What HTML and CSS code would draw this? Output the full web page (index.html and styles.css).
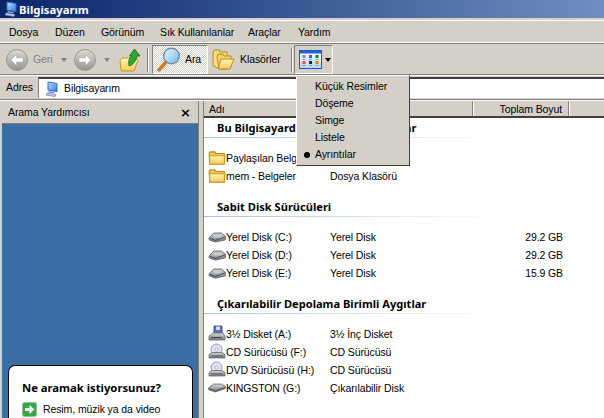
FILE: index.html
```html
<!DOCTYPE html>
<html lang="tr">
<head>
<meta charset="utf-8">
<title>Bilgisayarım</title>
<link rel="stylesheet" href="styles.css">
</head>
<body>
<svg class="sprites" width="0" height="0" aria-hidden="true">
  <defs>
    <linearGradient id="gBack" x1="0" y1="0" x2="0" y2="1"><stop offset="0" stop-color="#dcdcd6"/><stop offset="1" stop-color="#93938c"/></linearGradient>
    <linearGradient id="gFolder" x1="0" y1="0" x2="0" y2="1"><stop offset="0" stop-color="#fff4b8"/><stop offset="1" stop-color="#f5c85a"/></linearGradient>
    <linearGradient id="gPc" x1="0" y1="0" x2="1" y2="1"><stop offset="0" stop-color="#bcdcff"/><stop offset="1" stop-color="#2a7fe8"/></linearGradient>
    <linearGradient id="gDisk" x1="0" y1="0" x2="0" y2="1"><stop offset="0" stop-color="#d8d8d8"/><stop offset="1" stop-color="#74787e"/></linearGradient>
    <linearGradient id="gLens" x1="0" y1="0" x2="1" y2="1"><stop offset="0" stop-color="#f2fbff"/><stop offset="1" stop-color="#6fb4e4"/></linearGradient>
    <linearGradient id="gViews" x1="0" y1="0" x2="0" y2="1"><stop offset="0" stop-color="#ffffff"/><stop offset="1" stop-color="#b8d4f8"/></linearGradient>
    <symbol id="pc" viewBox="0 0 16 16">
      <path d="M4 1 L13 2.5 L13 10.5 L4 9 Z" fill="url(#gPc)" stroke="#3a68b8"/>
      <path d="M5 10 L11 11 L10 12.5 L4 11.5 Z" fill="#7f9fd8"/>
      <path d="M3 12 L12 13.5 L11 15.5 L2 14 Z" fill="#cfd4ea" stroke="#6a78a8" stroke-width=".7"/>
    </symbol>
    <symbol id="folder" viewBox="0 0 16 16">
      <path d="M1 4 Q1 2.5 2.5 2.5 L6 2.5 L7 4 L14 4 Q15 4 15 5.5 L14.5 13.5 L1.5 13.5 Z" fill="#f3c650" stroke="#b98a1e"/>
      <path d="M1.5 6 H14.5 V13.5 H1.5 Z" fill="url(#gFolder)" stroke="#c5971f" stroke-width=".8"/>
    </symbol>
    <symbol id="disk" viewBox="0 0 16 16">
      <path d="M1 9 L5 4.5 H12 L15.5 7.5 V10.5 L6.5 12.5 L1 10.5 Z" fill="url(#gDisk)" stroke="#5c6066" stroke-width=".8"/>
      <path d="M1.5 9 L6.5 11 L15 8" fill="none" stroke="#44474d" stroke-width=".8"/>
      <ellipse cx="8.5" cy="7" rx="3.6" ry="1.5" fill="#c8ccd2"/>
    </symbol>
    <symbol id="floppy" viewBox="0 0 18 18">
      <path d="M6 1 H14 V10 H6 Z" fill="#5f72c0" stroke="#2d3a80" stroke-width=".8"/>
      <path d="M8 1.5 V5 H12 V1.5" fill="#d8dcf0"/>
      <path d="M1 11 L5 8 H15 L17 11 V15 H1 Z" fill="url(#gDisk)" stroke="#666a72" stroke-width=".8"/>
      <path d="M3 12.5 H14" stroke="#3a3e46"/>
    </symbol>
    <symbol id="cd" viewBox="0 0 18 18">
      <circle cx="8.5" cy="6.5" r="5.5" fill="#dfe4f4" stroke="#7c86b4" stroke-width=".8"/>
      <circle cx="8.5" cy="6.5" r="1.6" fill="#fff" stroke="#7c86b4" stroke-width=".6"/>
      <path d="M1 11.5 L4 9.5 H14 L17 11.5 V15 H1 Z" fill="url(#gDisk)" stroke="#666a72" stroke-width=".8"/>
      <path d="M3 13 H15" stroke="#52565e"/>
    </symbol>
    <symbol id="usb" viewBox="0 0 16 16">
      <path d="M0.5 8 L5 4.5 H12 L15.5 6.5 V8.5 L6.5 11.5 L.5 9.5 Z" fill="url(#gDisk)" stroke="#6b6f75" stroke-width=".8"/>
      <path d="M1 8.5 L6.5 10.5 L15 7.5" fill="none" stroke="#44474d" stroke-width=".8"/>
    </symbol>
  </defs>
</svg>

<div class="window">
  <header class="titlebar">
    <svg class="title-icon"><use href="#pc"/></svg>
    <span class="title-text">Bilgisayarım</span>
  </header>

  <nav class="menubar">
    <span class="menu-item m-dosya">Dosya</span>
    <span class="menu-item m-duzen">Düzen</span>
    <span class="menu-item m-gorunum">Görünüm</span>
    <span class="menu-item m-sik">Sık Kullanılanlar</span>
    <span class="menu-item m-aras">Araçlar</span>
    <span class="menu-item">Yardım</span>
  </nav>

  <div class="toolbar">
    <svg class="round-btn back" viewBox="0 0 22 22">
      <circle cx="11" cy="11" r="10.5" fill="url(#gBack)" stroke="#9a9a92"/>
      <path d="M5 11 L10.5 5.5 V9 H17 V13 H10.5 V16.5 Z" fill="#fff" stroke="#a8a8a0" stroke-width=".5"/>
    </svg>
    <span class="tb-geri">Geri</span>
    <span class="caret grey caret-a"></span>
    <svg class="round-btn fwd" viewBox="0 0 22 22">
      <circle cx="11" cy="11" r="10.5" fill="url(#gBack)" stroke="#9a9a92"/>
      <path d="M17 11 L11.5 5.5 V9 H5 V13 H11.5 V16.5 Z" fill="#fff" stroke="#a8a8a0" stroke-width=".5"/>
    </svg>
    <span class="caret grey caret-b"></span>
    <svg class="up-icon" viewBox="0 0 22 24">
      <path d="M1 12 L3 10 H14 L19 12 L15 23 H2 Z" fill="url(#gFolder)" stroke="#c09a20"/>
      <path d="M10 18 C9 12 11 9 13 8 L10.5 8 L15.5 1 L21 8 L18 8 C17 13 14 17 10 18 Z" fill="#2ea82e" stroke="#146c14" stroke-width=".8"/>
    </svg>
    <span class="tb-sep sep-a"></span>
    <div class="tb-ara">
      <svg class="lens" viewBox="0 0 24 25">
        <path d="M2 23 L10 14" stroke="#d07a26" stroke-width="3.4" stroke-linecap="round"/>
        <circle cx="14.5" cy="9" r="7.8" fill="url(#gLens)" stroke="#6d8fb0" stroke-width="1.4"/>
      </svg>
      <span>Ara</span>
    </div>
    <div class="tb-klasor">
      <svg class="folders" viewBox="0 0 23 23">
        <path d="M1 5 L2 2 H7 L8 4 H15 V15 L6 20 L1 18 Z" fill="#f8dc84" stroke="#b98e1e"/>
        <path d="M5 9 L6 6 H11 L12 8 H19 V17 L16 21 H7 Z" fill="#f5d26a" stroke="#b98e1e"/>
        <path d="M6 21 L9 11 H22 L18 21 Z" fill="url(#gFolder)" stroke="#b98e1e"/>
      </svg>
      <span>Klasörler</span>
    </div>
    <span class="tb-sep sep-b"></span>
    <div class="tb-views">
      <svg class="views-icon" viewBox="0 0 23 19">
        <rect x=".5" y=".5" width="22" height="18" fill="url(#gViews)" stroke="#1f55c4"/>
        <rect x="1" y="1" width="21" height="2.5" fill="#2a62d4"/>
        <rect x="3.5" y="5" width="3" height="3" fill="#8a8ad0"/><rect x="10" y="5" width="3" height="3" fill="#2b62d8"/><rect x="16.5" y="5" width="3" height="3" fill="#14881e"/>
        <rect x="3.5" y="9" width="3" height=".8" fill="#888"/><rect x="10" y="9" width="3" height=".8" fill="#888"/><rect x="16.5" y="9" width="3" height=".8" fill="#888"/>
        <rect x="3.5" y="11" width="3" height="3" fill="#e8582c"/><rect x="10" y="11" width="3" height="3" fill="#14246c"/><rect x="16.5" y="11" width="3" height="3" fill="#c88a14"/>
        <rect x="3.5" y="15" width="3" height=".8" fill="#888"/><rect x="10" y="15" width="3" height=".8" fill="#888"/><rect x="16.5" y="15" width="3" height=".8" fill="#888"/>
      </svg>
      <span class="caret"></span>
    </div>
  </div>

  <div class="addressbar">
    <span class="addr-label">Adres</span>
    <div class="addr-field">
      <svg class="addr-icon"><use href="#pc"/></svg>
      <span>Bilgisayarım</span>
    </div>
  </div>

  <main class="content">
    <aside class="searchpane">
      <div class="pane-head"><span>Arama Yardımcısı</span><span class="pane-close">×</span></div>
      <div class="pane-body">
        <div class="pane-card">
          <h2>Ne aramak istiyorsunuz?</h2>
          <div class="pane-link">
            <svg class="go-arrow" viewBox="0 0 15 15">
              <rect x=".5" y=".5" width="14" height="14" rx="2" fill="#35a848" stroke="#8bc894"/>
              <path d="M3 6 H7.5 V3 L12.5 7.5 L7.5 12 V9 H3 Z" fill="#fff"/>
            </svg>
            <span>Resim, müzik ya da video</span>
          </div>
        </div>
      </div>
    </aside>

    <section class="listing">
      <div class="list-head">
        <span class="col col-name">Adı</span>
        <span class="col col-type">Tür</span>
        <span class="col col-size">Toplam Boyut</span>
        <span class="col col-rest"></span>
      </div>

      <h3 class="group first">Bu Bilgisayarda Depolanan Dosyalar</h3>
      <div class="row gap-first"><svg class="ri"><use href="#folder"/></svg><span class="name">Paylaşılan Belgeler</span><span class="type">Dosya Klasörü</span></div>
      <div class="row"><svg class="ri"><use href="#folder"/></svg><span class="name">mem - Belgeler</span><span class="type">Dosya Klasörü</span></div>

      <h3 class="group">Sabit Disk Sürücüleri</h3>
      <div class="row gap-first"><svg class="ri"><use href="#disk"/></svg><span class="name">Yerel Disk (C:)</span><span class="type">Yerel Disk</span><span class="size">29.2 GB</span></div>
      <div class="row"><svg class="ri"><use href="#disk"/></svg><span class="name">Yerel Disk (D:)</span><span class="type">Yerel Disk</span><span class="size">29.2 GB</span></div>
      <div class="row"><svg class="ri"><use href="#disk"/></svg><span class="name">Yerel Disk (E:)</span><span class="type">Yerel Disk</span><span class="size">15.9 GB</span></div>

      <h3 class="group group-last">Çıkarılabilir Depolama Birimli Aygıtlar</h3>
      <div class="row gap-first"><svg class="ri"><use href="#floppy"/></svg><span class="name">3½ Disket (A:)</span><span class="type">3½ İnç Disket</span></div>
      <div class="row"><svg class="ri"><use href="#cd"/></svg><span class="name">CD Sürücüsü (F:)</span><span class="type">CD Sürücüsü</span></div>
      <div class="row"><svg class="ri"><use href="#cd"/></svg><span class="name">DVD Sürücüsü (H:)</span><span class="type">CD Sürücüsü</span></div>
      <div class="row"><svg class="ri"><use href="#usb"/></svg><span class="name">KINGSTON (G:)</span><span class="type">Çıkarılabilir Disk</span></div>
    </section>
  </main>

  <ul class="viewmenu">
    <li>Küçük Resimler</li>
    <li>Döşeme</li>
    <li>Simge</li>
    <li>Listele</li>
    <li class="checked">Ayrıntılar</li>
  </ul>
</div>
</body>
</html>
```

FILE: styles.css
```css
* { box-sizing: border-box; }
html, body { margin: 0; padding: 0; }
body {
  width: 604px;
  height: 418px;
  overflow: hidden;
  font: 10.5px/13px "Liberation Sans", Arial, sans-serif;
  letter-spacing: -0.1px;
  color: #000;
  background: #d4d0c8;
}
.sprites { position: absolute; }
.window { position: relative; width: 604px; height: 418px; display: flex; flex-direction: column; }

.titlebar {
  height: 18px;
  display: flex;
  align-items: center;
  padding-left: 3px;
  gap: 0;
  background: linear-gradient(90deg, #0a246a 0%, #3a5a96 50%, #6f8fc2 100%);
  color: #fff;
  font-family: "Noto Sans", sans-serif;
  font-size: 11.3px;
  font-weight: 700;
  letter-spacing: 0;
}
.title-icon { width: 16px; height: 16px; }

.menubar {
  height: 24px;
  margin-top: 2px;
  display: flex;
  align-items: center;
  padding: 0 0 0 9px;
  border-top: 1px solid #fff;
  border-bottom: 1px solid #808080;
  box-shadow: inset 0 -1px 0 #fff;
}
.menu-item { display: block; }
.m-dosya { width: 46px; }
.m-duzen { width: 46px; }
.m-gorunum { width: 59px; }
.m-sik { width: 88px; }
.m-aras { width: 50px; }

.toolbar {
  height: 31px;
  display: flex;
  align-items: center;
  padding: 1px 0 0 6px;
  border-bottom: 1px solid #808080;
}
.round-btn { width: 22px; height: 22px; flex: none; }
.tb-geri { margin-left: 5px; width: 28px; color: #808080; }
.caret { width: 0; height: 0; flex: none; border: 3.5px solid transparent; border-top: 4px solid #000; border-bottom: 0; }
.caret.grey { border-top-color: #808080; }
.caret-a { margin-right: 7px; }
.caret-b { margin-left: 8px; }
.up-icon { width: 22px; height: 24px; margin-left: 9px; flex: none; }
.tb-sep { width: 2px; height: 24px; flex: none; border-left: 1px solid #808080; border-right: 1px solid #fff; }
.sep-a { margin-left: 6px; }
.tb-ara {
  width: 56px;
  height: 29px;
  margin-left: 3px;
  display: flex;
  align-items: center;
  gap: 4px;
  padding-left: 4px;
  background: repeating-conic-gradient(#fff 0 25%, #d4d0c8 0 50%) 0 0 / 2px 2px;
  border: 1px solid;
  border-color: #808080 #fff #fff #808080;
}
.lens { width: 24px; height: 25px; flex: none; }
.tb-klasor { display: flex; align-items: center; gap: 5px; margin-left: 4px; width: 79px; }
.folders { width: 23px; height: 23px; flex: none; }
.tb-views {
  width: 39px;
  height: 29px;
  margin-left: 1px;
  display: flex;
  align-items: center;
  gap: 3px;
  padding-left: 4px;
  border: 1px solid;
  border-color: #808080 #fff #fff #808080;
}
.views-icon { width: 23px; height: 19px; flex: none; }

.addressbar {
  height: 25px;
  display: flex;
  align-items: center;
  padding-left: 6px;
  border-top: 1px solid #fff;
  border-bottom: 1px solid #808080;
}
.addr-label { width: 32px; }
.addr-field {
  flex: 1;
  height: 21px;
  display: flex;
  align-items: center;
  gap: 4px;
  padding-left: 5px;
  background: #fff;
  border-top: 2px solid #404040;
  border-left: 1px solid #808080;
}
.addr-icon { width: 16px; height: 16px; flex: none; }

.content { flex: 1; display: flex; min-height: 0; padding-top: 0; border-top: 1px solid #fff; }

.searchpane { width: 199px; display: flex; flex-direction: column; padding: 1px 0 0 2px; border-right: 1px solid #808080; }
.pane-head {
  height: 22px;
  display: flex;
  align-items: center;
  justify-content: space-between;
  padding: 0 7px 0 6px;
  border-bottom: 1px solid #808080;
}
.pane-close { font: 700 13px/13px "DejaVu Sans", sans-serif; letter-spacing: 0; }
.pane-body {
  flex: 1;
  background: #3a6ea5;
  padding: 241px 5px 0 6px;
  min-height: 0;
}
.pane-card {
  height: 60px;
  background: #fff;
  border: 1px solid #000;
  border-bottom: 0;
  border-radius: 7px 7px 0 0;
  padding: 15px 0 0 13px;
}
.pane-card h2 { margin: 0; font: 700 11.25px/14px "Noto Sans", sans-serif; letter-spacing: 0; }
.pane-link { display: flex; align-items: center; gap: 6px; margin-top: 7px; }
.go-arrow { width: 15px; height: 15px; flex: none; }

.listing { flex: 1; margin-left: 4px; background: #fff; min-width: 0; border-left: 1px solid #808080; }
.list-head { height: 17px; display: flex; background: #d4d0c8; border-bottom: 2px solid #404040; }
.col { display: block; height: 15px; line-height: 17px; padding-left: 5px; border-right: 1px solid #808080; box-shadow: 1px 0 0 #fff; }
.col-name { width: 126px; }
.col-type { width: 143px; }
.col-size { width: 96px; padding: 0 6px 0 0; text-align: right; }
.col-rest { flex: 1; border-right: 0; }

.group {
  margin: 15px 0 0;
  height: 17px;
  padding-left: 13px;
  font: 700 11.1px/14px "Noto Sans", sans-serif;
  letter-spacing: 0;
  border-bottom: 1px solid transparent;
  border-image: linear-gradient(90deg, #a9c4e8, #ffffff 75%) 1;
}
.group.first { margin-top: 3px; }

.row { height: 18px; display: flex; align-items: center; padding-left: 4px; }
.gap-first { margin-top: 11px; }
.ri { width: 18px; height: 18px; flex: none; }
.name { width: 104px; white-space: nowrap; }
.type { width: 150px; white-space: nowrap; }
.size { width: 83px; text-align: right; white-space: nowrap; }

.viewmenu {
  position: absolute;
  left: 296px;
  top: 75px;
  width: 114px;
  height: 91px;
  margin: 0;
  padding: 2px 0 0 18px;
  list-style: none;
  background: #d4d0c8;
  border: 1px solid;
  border-color: #fff #404040 #404040 #fff;
}
.viewmenu li { height: 17px; line-height: 17px; position: relative; }
.viewmenu .checked::before {
  content: "";
  position: absolute;
  left: -11px;
  top: 6px;
  width: 6px;
  height: 6px;
  border-radius: 50%;
  background: #000;
}
```
